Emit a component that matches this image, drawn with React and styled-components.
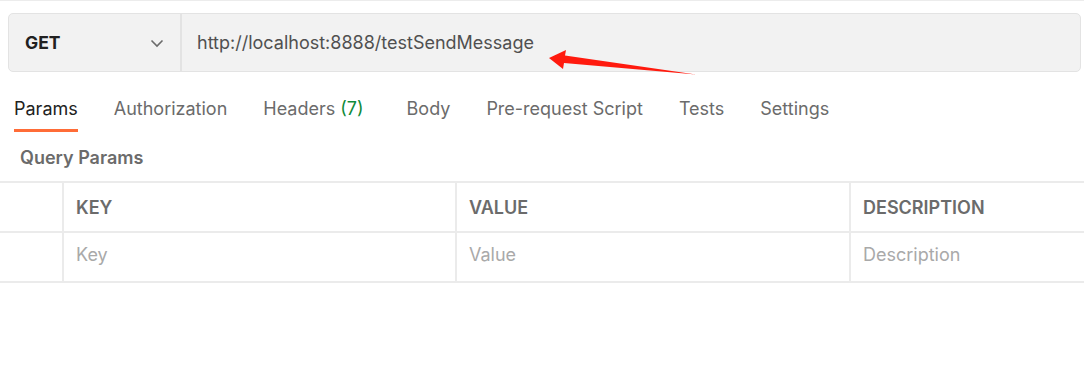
import React from "react";
import styled, { createGlobalStyle } from "styled-components";

const Global = createGlobalStyle`
  html, body { margin: 0; padding: 0; background: #fff; }
  body { font-family: Inter, "Noto Sans", sans-serif; -webkit-font-smoothing: antialiased; }
`;

const Page = styled.div`
  position: relative;
  width: 1084px;
  height: 366px;
  border-top: 1px solid #ececec;
  box-sizing: border-box;
  overflow: hidden;
`;

const RequestBar = styled.div`
  display: flex;
  margin: 12px 3px 0 8px;
  height: 59px;
  box-sizing: border-box;
  border: 1px solid #e3e3e3;
  border-radius: 5px;
  background: #f2f2f2;
`;

const Method = styled.div`
  width: 173px;
  display: flex;
  align-items: center;
  justify-content: space-between;
  padding: 0 16px 0 16px;
  box-sizing: border-box;
  border-right: 2px solid #e3e3e3;
  font-weight: 700;
  font-size: 17.5px;
  color: #212121;
`;

const Url = styled.div`
  flex: 1;
  display: flex;
  align-items: center;
  padding-left: 15px;
  font-size: 18px;
  color: #505050;
`;

const Tabs = styled.div`
  display: flex;
  gap: 36px;
  margin-left: 14px;
  height: 60px;
`;

const Tab = styled.div`
  position: relative;
  font-size: 18px;
  line-height: 22px;
  color: ${(p) => (p.$active ? "#212121" : "#6b6b6b")};
  padding-top: 26px;
  box-sizing: border-box;
  height: 60px;
  &::after {
    content: "";
    display: ${(p) => (p.$active ? "block" : "none")};
    position: absolute;
    left: 0;
    right: 0;
    bottom: 0;
    height: 3px;
    background: #ff6c37;
  }
`;

const Count = styled.span`
  color: #0f8a3a;
  margin-left: 5px;
`;

const SectionTitle = styled.div`
  font-weight: 600;
  font-size: 18px;
  line-height: 22px;
  color: #6b6b6b;
  padding: 15px 0 12px 20px;
`;

const Table = styled.div`
  display: grid;
  grid-template-columns: 62px 393px 394px 1fr;
  border-top: 2px solid #ebebeb;
`;

const Cell = styled.div`
  height: 48px;
  box-sizing: border-box;
  display: flex;
  align-items: center;
  padding-left: 12px;
  padding-bottom: ${(p) => (p.$head ? "0" : "6px")};
  border-bottom: 2px solid #ebebeb;
  border-left: ${(p) => (p.$first ? "none" : "2px solid #ebebeb")};
  font-size: 18px;
  font-weight: ${(p) => (p.$head ? 600 : 400)};
  color: ${(p) => (p.$head ? "#6b6b6b" : "#a9a9a9")};
  height: 50px;
`;

const Arrow = styled.svg`
  position: absolute;
  left: 540px;
  top: 40px;
`;

const Chevron = () => (
  <svg width="14" height="14" viewBox="0 0 14 14">
    <path d="M1.5 4.5 L7 10 L12.5 4.5" fill="none" stroke="#6b6b6b" strokeWidth="1.6" />
  </svg>
);

export default function App() {
  return (
    <>
      <Global />
      <Page>
        <RequestBar>
          <Method>
            <span>GET</span>
            <Chevron />
          </Method>
          <Url>http://localhost:8888/testSendMessage</Url>
        </RequestBar>
        <Tabs>
          <Tab $active>Params</Tab>
          <Tab>Authorization</Tab>
          <Tab>
            Headers<Count>(7)</Count>
          </Tab>
          <Tab style={{ marginLeft: 7 }}>Body</Tab>
          <Tab>Pre-request Script</Tab>
          <Tab>Tests</Tab>
          <Tab>Settings</Tab>
        </Tabs>
        <SectionTitle>Query Params</SectionTitle>
        <Table>
          <Cell $first $head />
          <Cell $head>KEY</Cell>
          <Cell $head>VALUE</Cell>
          <Cell $head>DESCRIPTION</Cell>
          <Cell $first />
          <Cell>Key</Cell>
          <Cell>Value</Cell>
          <Cell>Description</Cell>
        </Table>
        <Arrow width="170" height="40" viewBox="540 40 170 40">
          <polygon
            points="549,57 566,49 565,54.5 696,73.5 564,62 563,68"
            fill="#ff1a0e"
          />
        </Arrow>
      </Page>
    </>
  );
}
